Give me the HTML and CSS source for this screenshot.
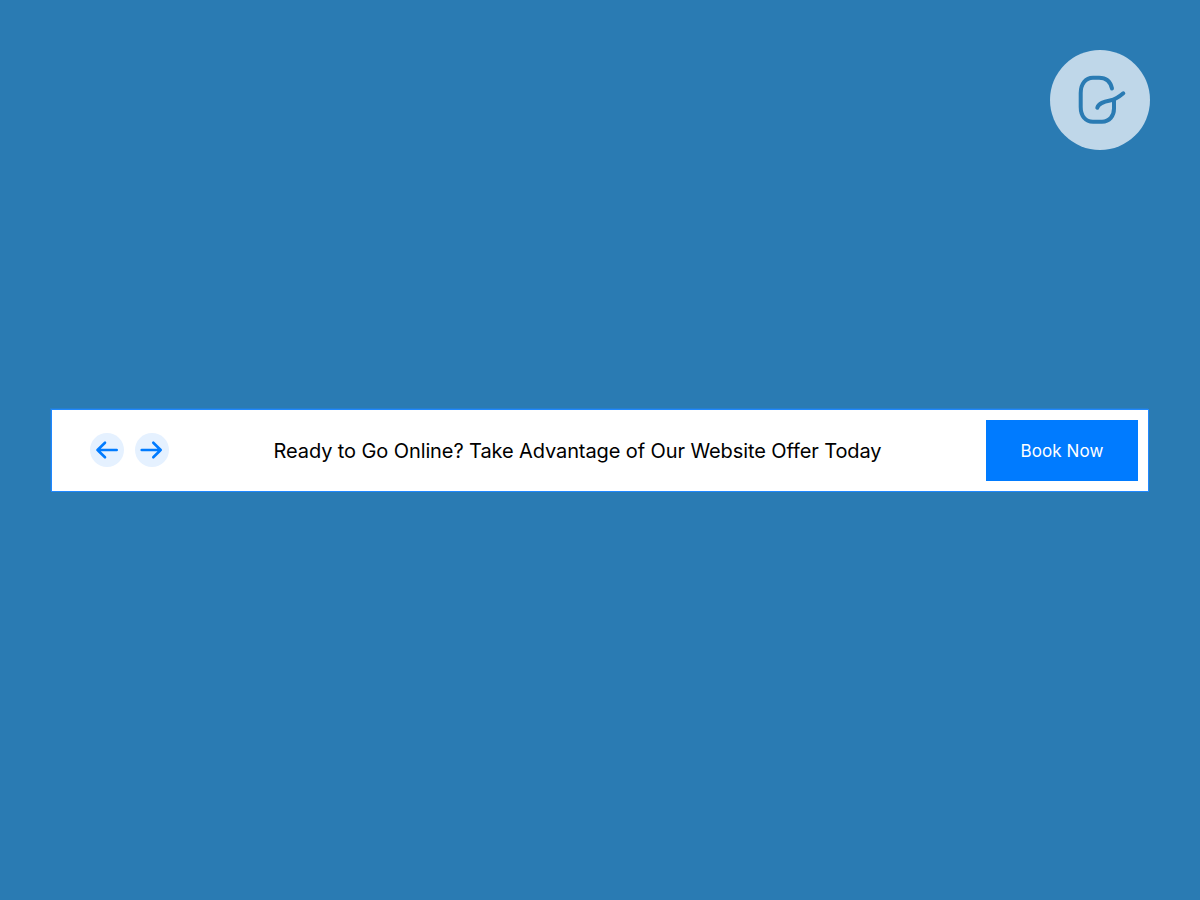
FILE: index.html
```html
<!DOCTYPE html>
<html lang="en">
<head>
<meta charset="utf-8">
<title>Website Offer</title>
<link rel="stylesheet" href="styles.css">
</head>
<body>
<a class="logo" href="#" aria-label="Logo">
  <svg width="100" height="100" viewBox="0 0 100 100" fill="none">
    <path d="M62 38.500C60.500 31.500 56 27.700 49 27.700H43C35.500 27.700 30.700 34 30.700 43V57C30.700 66 35.500 71.700 43 71.700H52C59.500 71.700 64 66 64 58.500V50" stroke="#2a7bb3" stroke-width="4" stroke-linecap="round" stroke-linejoin="round"/>
    <path d="M47.300 57.700C48.500 53 54 51.700 60 50.500C65 49.500 69 47 73.300 43.300" stroke="#2a7bb3" stroke-width="4" stroke-linecap="round" stroke-linejoin="round"/>
  </svg>
</a>
<main class="offer">
  <div class="arrows">
    <button class="arrow" aria-label="Previous">
      <svg width="24" height="24" viewBox="0 0 24 24" fill="none"><path d="M21.700 12H2.500M10 4.700L2.500 12L10 19.300" stroke="#007bff" stroke-width="2.600" stroke-linecap="round" stroke-linejoin="round"/></svg>
    </button>
    <button class="arrow" aria-label="Next">
      <svg width="24" height="24" viewBox="0 0 24 24" fill="none"><path d="M1.700 12H20.700M13.300 4.700L20.700 12L13.300 19.300" stroke="#007bff" stroke-width="2.600" stroke-linecap="round" stroke-linejoin="round"/></svg>
    </button>
  </div>
  <p class="message">Ready to Go Online? Take Advantage of Our Website Offer Today</p>
  <a class="book" href="#">Book Now</a>
</main>
</body>
</html>
```
FILE: styles.css
```css
* { box-sizing: border-box; }
html, body { height: 100%; }
body {
  margin: 0;
  background: #2a7bb3;
  display: flex;
  align-items: center;
  justify-content: center;
  font-family: Inter, "Liberation Sans", sans-serif;
}
.logo {
  position: absolute;
  top: 50px;
  right: 50px;
  width: 100px;
  height: 100px;
  border-radius: 50%;
  background: #bfd7e9;
  display: block;
}
.logo svg { display: block; }
.offer {
  width: 1098px;
  height: 83px;
  margin-top: 1px;
  background: #fff;
  border: 1px solid #1f88ff;
  box-shadow: -1px -1px 0 0 rgba(31, 136, 255, 0.35);
  display: flex;
  align-items: center;
  padding: 0 10px 0 38px;
}
.arrows { display: flex; gap: 11px; flex: none; margin-bottom: 1px; }
.arrow {
  width: 34px;
  height: 34px;
  padding: 0;
  border: 0;
  border-radius: 50%;
  background: #e5f1ff;
  display: flex;
  align-items: center;
  justify-content: center;
}
.message {
  flex: 1;
  margin: 0;
  padding-top: 1px;
  text-align: center;
  font-size: 20px;
  line-height: 30px;
  color: #000;
  letter-spacing: -0.1px;
}
.book {
  flex: none;
  width: 152px;
  height: 61px;
  padding-top: 1px;
  background: #007bff;
  color: #fff;
  font-size: 17px;
  text-decoration: none;
  display: flex;
  align-items: center;
  justify-content: center;
  letter-spacing: 0.1px;
}
```
